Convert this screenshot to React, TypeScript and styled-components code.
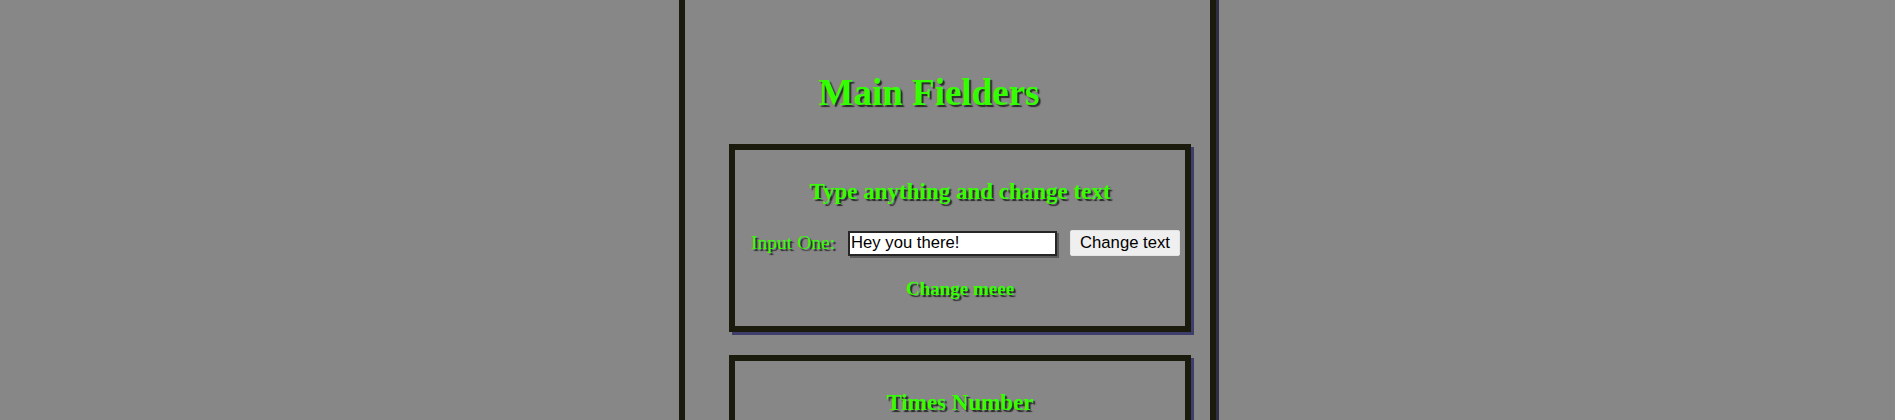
import React, { useState } from "react";
import styled, { createGlobalStyle } from "styled-components";

const Global = createGlobalStyle`
  html, body {
    margin: 0;
    padding: 0;
    background: #878787;
    font-family: "Liberation Serif", "Times New Roman", serif;
  }
`;

const Page = styled.div`
  width: 537px;
  min-height: 420px;
  margin: 0 auto;
  box-sizing: border-box;
  border-left: 6px solid #1b1b0d;
  border-right: 6px solid #1b1b0d;
  box-shadow: 3px 0 0 #2e2e44;
  padding: 71px 19px 40px 44px;
`;

const Title = styled.h1`
  margin: 0 0 30px;
  padding-right: 62px;
  text-align: center;
  font-size: 37px;
  font-weight: bold;
  line-height: normal;
  color: #33ff00;
  text-shadow: 2px 2px 1px #2a2a2a;
`;

const Card = styled.section`
  width: 462px;
  box-sizing: border-box;
  border: 6px solid #1b1b0d;
  box-shadow: 3px 3px 0 #3e3e6a;
  padding: 29px 0 26px;
  margin-bottom: 23px;
`;

const CardTitle = styled.h3`
  margin: 0;
  text-align: center;
  font-size: 23px;
  font-weight: bold;
  line-height: normal;
  color: #33ff00;
  text-shadow: 2px 2px 1px #2a2a2a;
`;

const Row = styled.div`
  display: flex;
  justify-content: center;
  align-items: center;
  margin: 25px 0 22px;
  padding-left: 11px;
`;

const Label = styled.label`
  font-size: 19.5px;
  color: #33ff00;
  text-shadow: 2px 2px 1px #2a2a2a;
  margin-right: 13px;
`;

const Input = styled.input`
  width: 209px;
  height: 25px;
  box-sizing: border-box;
  border: 2px solid #262626;
  box-shadow: 2px 2px 0 #5a5a5a;
  padding: 0 1px;
  font-family: "Liberation Sans", Arial, sans-serif;
  font-size: 16.67px;
  color: #000;
  background: #fff;
  outline: none;
`;

const Button = styled.button`
  margin-left: 13px;
  height: 26px;
  padding: 0 9px;
  border: 1px solid #e4e4e4;
  border-radius: 2px;
  background: #efefef;
  font-family: "Liberation Sans", Arial, sans-serif;
  font-size: 16.67px;
  color: #000;
  cursor: pointer;
`;

const Output = styled.p`
  margin: 0;
  text-align: center;
  font-size: 19px;
  font-weight: bold;
  line-height: normal;
  color: #33ff00;
  text-shadow: 2px 2px 1px #2a2a2a;
`;

export default function App() {
  const [value, setValue] = useState("Hey you there!");
  const [text, setText] = useState("Change meee");
  return (
    <>
      <Global />
      <Page>
        <Title>Main Fielders</Title>
        <Card>
          <CardTitle>Type anything and change text</CardTitle>
          <Row>
            <Label htmlFor="one">Input One:</Label>
            <Input id="one" value={value} onChange={(e) => setValue(e.target.value)} />
            <Button onClick={() => setText(value)}>Change text</Button>
          </Row>
          <Output>{text}</Output>
        </Card>
        <Card>
          <CardTitle>Times Number</CardTitle>
        </Card>
      </Page>
    </>
  );
}
